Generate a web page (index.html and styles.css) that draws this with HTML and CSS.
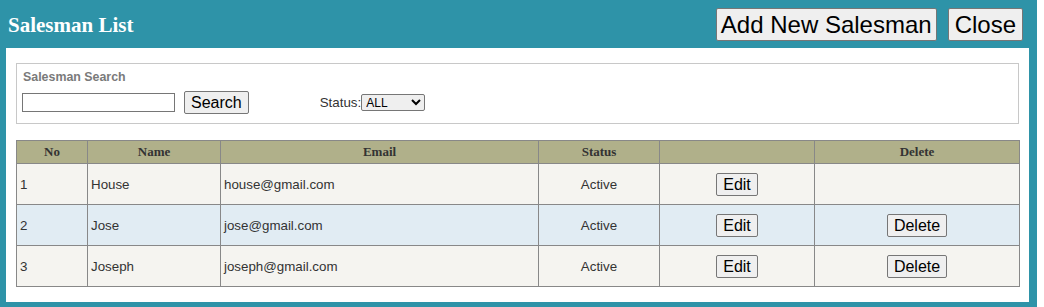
FILE: index.html
```html
<!DOCTYPE html>
<html>
<head>
<meta charset="utf-8">
<title>Salesman List</title>
<link rel="stylesheet" href="styles.css">
</head>
<body>
<div class="dialog">
  <div class="titlebar">
    <h1 class="title">Salesman List</h1>
    <div class="title-actions">
      <button class="btn btn-big" type="button">Add New Salesman</button>
      <button class="btn btn-big btn-close" type="button">Close</button>
    </div>
  </div>
  <div class="panel">
    <div class="search-box">
      <div class="search-label">Salesman Search</div>
      <div class="search-row">
        <input class="search-input" type="text">
        <button class="btn btn-search" type="button">Search</button>
        <label class="status-label">Status:<select class="status-select"><option>ALL</option><option>Active</option><option>Inactive</option></select></label>
      </div>
    </div>
    <table class="grid">
      <thead>
        <tr>
          <th class="c-no">No</th>
          <th class="c-name">Name</th>
          <th class="c-email">Email</th>
          <th class="c-status">Status</th>
          <th class="c-edit"></th>
          <th class="c-del">Delete</th>
        </tr>
      </thead>
      <tbody>
        <tr class="row-a">
          <td>1</td>
          <td>House</td>
          <td>house@gmail.com</td>
          <td class="center">Active</td>
          <td class="center"><button class="btn btn-row" type="button">Edit</button></td>
          <td class="center"></td>
        </tr>
        <tr class="row-b">
          <td>2</td>
          <td>Jose</td>
          <td>jose@gmail.com</td>
          <td class="center">Active</td>
          <td class="center"><button class="btn btn-row" type="button">Edit</button></td>
          <td class="center"><button class="btn btn-row" type="button">Delete</button></td>
        </tr>
        <tr class="row-a">
          <td>3</td>
          <td>Joseph</td>
          <td>joseph@gmail.com</td>
          <td class="center">Active</td>
          <td class="center"><button class="btn btn-row" type="button">Edit</button></td>
          <td class="center"><button class="btn btn-row" type="button">Delete</button></td>
        </tr>
      </tbody>
    </table>
  </div>
</div>
</body>
</html>
```

FILE: styles.css
```css
html, body {
  margin: 0;
  padding: 0;
  background: #ffffff;
}

body {
  font-family: "Liberation Sans", Arial, sans-serif;
  color: #333333;
}

.dialog {
  width: 1037px;
  box-sizing: border-box;
  background: #2e93a8;
  padding: 0 8px 6px 6px;
}

.titlebar {
  height: 48px;
  display: flex;
  align-items: center;
  justify-content: space-between;
  padding: 0 6px 0 2px;
}

.title {
  margin: 0;
  font-family: "Liberation Serif", "Times New Roman", serif;
  font-weight: bold;
  font-size: 21px;
  color: #ffffff;
  line-height: 24px;
  padding-top: 1px;
}

.title-actions {
  display: flex;
  gap: 11px;
  padding-top: 1px;
}

.btn {
  font-family: "Liberation Sans", Arial, sans-serif;
  color: #000000;
  background: #efefef;
  border: 1px solid #767676;
  border-radius: 2px;
  margin: 0;
  cursor: default;
}

.btn-big {
  font-size: 24px;
  line-height: 27px;
  padding: 2px 4px;
}

.btn-close {
  padding: 2px 6px;
}

.btn-search,
.btn-row {
  font-size: 16px;
  line-height: 19px;
  padding: 1px 6px;
}

.panel {
  background: #ffffff;
  padding: 15px 10px 15px 10px;
}

.search-box {
  border: 1px solid #c8c8c8;
  padding: 6px 6px 9px 5px;
}

.search-label {
  font-size: 12.4px;
  font-weight: bold;
  color: #7a7a7a;
  line-height: 15px;
  padding-left: 1px;
  margin-bottom: 6px;
}

.search-row {
  display: flex;
  align-items: center;
  height: 23px;
}

.search-input {
  width: 153px;
  height: 19px;
  box-sizing: border-box;
  border: 1px solid #767676;
  margin: 0 9px 0 0;
  padding: 0 2px;
  font-size: 13px;
}

.status-label {
  margin-left: 71px;
  font-size: 13.33px;
  color: #333333;
  display: flex;
  align-items: center;
}

.status-select {
  width: 64px;
  height: 17px;
  box-sizing: border-box;
  font-family: "Liberation Sans", Arial, sans-serif;
  font-size: 12px;
  color: #000000;
  margin: 0;
  padding: 0;
  border: 1px solid #767676;
  border-radius: 2px;
}

.grid {
  margin-top: 16px;
  width: 100%;
  border-collapse: collapse;
  table-layout: fixed;
  border: 1px solid #888888;
}

.grid th,
.grid td {
  border: 1px solid #888888;
  box-sizing: border-box;
}

.grid th {
  background: #b0b08a;
  font-family: "Liberation Serif", "Times New Roman", serif;
  font-weight: bold;
  font-size: 13px;
  color: #333333;
  height: 23px;
  padding: 0 4px;
  text-align: center;
}

.grid td {
  font-size: 13.33px;
  color: #333333;
  height: 41px;
  padding: 0 3px;
  vertical-align: middle;
}

.grid td.center {
  text-align: center;
}

.row-a td {
  background: #f5f4f0;
}

.row-b td {
  background: #e1ecf3;
}

.c-no { width: 71px; }
.c-name { width: 133px; }
.c-email { width: 318px; }
.c-status { width: 121px; }
.c-edit { width: 155px; }
.c-del { width: 205px; }
```
